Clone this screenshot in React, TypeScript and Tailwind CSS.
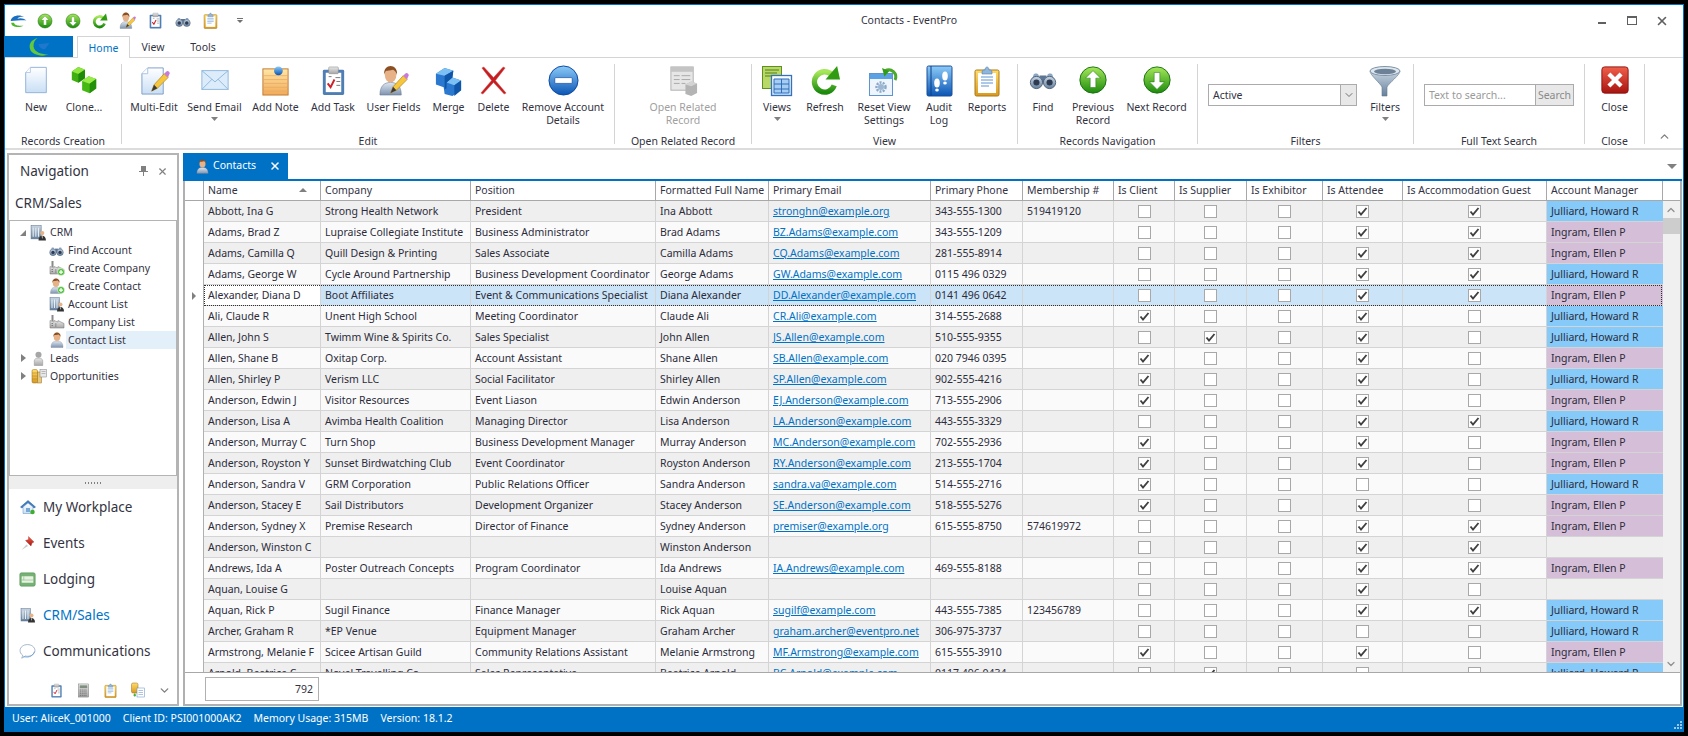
import type { ReactNode } from 'react';
import { ChevronDown, ChevronUp, X } from 'lucide-react';

type IconProps = { s?: number };

function Svg({ s = 32, children }: IconProps & { children: ReactNode }) {
  return (
    <svg width={s} height={s} viewBox="0 0 32 32" className="shrink-0">
      {children}
    </svg>
  );
}

// shared gradients, referenced by id from every icon
function Defs() {
  const g: [string, string, string][] = [
    ['gGreen', '#a6e85a', '#1c8a0c'],
    ['gBlue', '#8ccbf7', '#0a55b5'],
    ['gRed', '#f0604a', '#a81410'],
    ['gPaper', '#ffffff', '#c9dff5'],
    ['gNote', '#ffe7a6', '#f2aa56'],
    ['gGray', '#e8e8e8', '#a6a6a6'],
    ['gSteel', '#c9d6e2', '#66809c'],
    ['gBody', '#dfe7f1', '#7d93b0'],
    ['gGold', '#ffdc6a', '#d8991e'],
  ];
  return (
    <svg width="0" height="0" className="absolute">
      <defs>
        {g.map(([id, a, b]) => (
          <linearGradient key={id} id={id} x1="0" y1="0" x2="0" y2="1">
            <stop offset="0" stopColor={a} />
            <stop offset="1" stopColor={b} />
          </linearGradient>
        ))}
      </defs>
    </svg>
  );
}

const pencil = (
  <g>
    <path d="M13 27l2.5-6.500L26 9l4 4-11 11z" fill="#f6c63c" stroke="#b0801c" strokeWidth=".7" />
    <path d="M26 9l2-2a2 2 0 0 1 3 3l-1 3z" fill="#c77ad8" />
    <path d="M13 27l2.500-6.500 3.500 3.500z" fill="#3a3a3a" />
  </g>
);

const Page = ({ s }: IconProps) => (
  <Svg s={s}>
    <path d="M10 2.500h17v27H5V8z" fill="url(#gPaper)" stroke="#8fb0d8" />
    <path d="M10 2.500V8H5" fill="#fff" stroke="#b4cbe6" />
  </Svg>
);

const Clone = ({ s }: IconProps) => (
  <Svg s={s}>
    <path d="M3 7l7-5 7 3v9l-7 5-7-3z" fill="#3fae10" />
    <path d="M3 7l7-5 7 3-7 4.500z" fill="#8ee63f" />
    <path d="M10 9.500l7-4.500v9l-7 5z" fill="#1f8a08" />
    <path d="M14 17l7-5 8 3v10l-7 5-8-3z" fill="#46b814" />
    <path d="M14 17l7-5 8 3-7 5z" fill="#98ec48" />
    <path d="M22 20l7-5v10l-7 5z" fill="#238f0a" />
  </Svg>
);

const MultiEdit = ({ s }: IconProps) => (
  <Svg s={s}>
    <path d="M9 3h16v27H3V9z" fill="url(#gPaper)" stroke="#7f9fcb" />
    <path d="M9 3v6H3" fill="#fff" stroke="#a8c2e2" />
    {pencil}
  </Svg>
);

const Mail = ({ s }: IconProps) => (
  <Svg s={s}>
    <rect x="2" y="6" width="28" height="20" fill="#dcecfa" stroke="#8db6dc" />
    <path d="M2 6l14 12L30 6M2 26l11-11M30 26L19 15" fill="none" stroke="#8db6dc" />
  </Svg>
);

const Note = ({ s }: IconProps) => (
  <Svg s={s}>
    <rect x="3" y="4" width="26" height="27" fill="url(#gNote)" stroke="#c07a38" />
    <path d="M3 11h26M3 15h26M3 19h26M3 23h26M3 27h26" stroke="#e2a868" strokeWidth=".7" />
    <circle cx="19" cy="6" r="4.500" fill="url(#gBlue)" />
  </Svg>
);

const Task = ({ s }: IconProps) => (
  <Svg s={s}>
    <rect x="5" y="5" width="22" height="26" rx="1.500" fill="#4f7eb5" />
    <rect x="8" y="8" width="16" height="20" fill="#fff" />
    <rect x="11" y="2" width="10" height="7" rx="1" fill="url(#gGray)" stroke="#808080" strokeWidth=".5" />
    <path d="M10 19l3 4 4-8" fill="none" stroke="#d0202a" strokeWidth="2" />
    <path d="M18 13h5M19 17h4M19 21h4M11 12h3" stroke="#777" />
  </Svg>
);

const Person = ({ s }: IconProps) => (
  <Svg s={s}>
    <path d="M4 31c0-9 4-13 12-13s12 4 12 13z" fill="url(#gBody)" stroke="#6a7a90" strokeWidth=".6" />
    <ellipse cx="16" cy="10" rx="6.500" ry="8" fill="#e7b287" />
    <path d="M9 10c-1-6 3-9 7-9s8 3 7 9c-1-3-2-4-4-5-3 1-7 1-8 1-1 1-1.500 2-2 4z" fill="#8a4f22" />
  </Svg>
);

const UserFields = ({ s }: IconProps) => (
  <Svg s={s}>
    <path d="M2 31c0-9 4-13 11-13s11 4 11 13z" fill="url(#gBody)" stroke="#6a7a90" strokeWidth=".6" />
    <ellipse cx="13" cy="10" rx="6" ry="8" fill="#e7b287" />
    <path d="M6.500 10c-1-6 3-9 6.500-9s7.500 3 6.500 9c-1-3-2-4-4-5-3 1-6 1-7 1-1 1-1.500 2-2 4z" fill="#8a4f22" />
    <g transform="translate(0 2)">{pencil}</g>
  </Svg>
);

const Merge = ({ s }: IconProps) => (
  <Svg s={s}>
    <path d="M3 9l9-6 9 3-1 7 9 3v10l-9 6-8-2-1-7-8-3z" fill="#2a78d0" />
    <path d="M3 9l9-6 9 3-9 5zM20 13l9 3-7 5-8-3z" fill="#7cc0f4" />
    <path d="M12 11l9-5-1 7-6 5v6l-2 1zM22 21l7-5v10l-7 6z" fill="#0f56a8" />
  </Svg>
);

const Del = ({ s }: IconProps) => (
  <Svg s={s}>
    <path d="M4 3l2-1 10 11L26 2l2 1-10 13 11 13-2 1-11-12L5 30l-2-1 11-13z" fill="#c41e22" stroke="#d84c48" strokeWidth=".5" />
  </Svg>
);

const RemoveC = ({ s }: IconProps) => (
  <Svg s={s}>
    <circle cx="16" cy="16" r="15" fill="url(#gBlue)" stroke="#0c46a0" />
    <rect x="7" y="13" width="18" height="6" rx="1" fill="#fff" stroke="#0c46a0" strokeWidth=".7" />
  </Svg>
);

const OpenRel = ({ s }: IconProps) => (
  <Svg s={s}>
    <rect x="3" y="2" width="23" height="24" fill="#e6e6e6" stroke="#b0b0b0" />
    <rect x="3" y="2" width="23" height="5" fill="#c4c4c4" />
    <path d="M6 11h6M14 11h9M6 15h6M14 15h9M6 19h6M14 19h4" stroke="#a8a8a8" />
    <path d="M18 20l6-3 6 2v10l-6 3-6-2z" fill="#b4b4b4" />
    <path d="M18 20l6-3 6 2-6 3z" fill="#d4d4d4" />
  </Svg>
);

const Views = ({ s }: IconProps) => (
  <Svg s={s}>
    <rect x="1.500" y="1.500" width="19" height="22" fill="#b8d968" stroke="#5f8f20" />
    <path d="M4 5h14M4 8h12M4 11h6" stroke="#527e1a" />
    <rect x="10.500" y="10.500" width="20" height="20" fill="url(#gPaper)" stroke="#3472bc" strokeWidth="1.300" />
    <path d="M13 14h15v14H13zM13 19h15M13 24h15M20.500 14v14" fill="#a7cdf3" stroke="#2f6fbc" />
  </Svg>
);

const Refresh = ({ s }: IconProps) => (
  <Svg s={s}>
    <path d="M25 21a10.500 10.500 0 1 1-2.500-11" fill="none" stroke="url(#gGreen)" strokeWidth="5.500" />
    <path d="M16 15L31 15 28 1z" fill="#2f9c12" />
  </Svg>
);

const ResetV = ({ s }: IconProps) => (
  <Svg s={s}>
    <rect x="1.500" y="8.500" width="23" height="22" fill="#eef5fd" stroke="#5e94cf" />
    <rect x="2" y="9" width="22" height="5" fill="#5aa2e2" />
    <circle cx="13" cy="22" r="4.500" fill="none" stroke="#8ba9c8" strokeWidth="2.500" strokeDasharray="2 1.200" />
    <circle cx="13" cy="22" r="3" fill="#9db7d2" />
    <path d="M17 6a7 7 0 0 1 10 9" fill="none" stroke="#4aa82a" strokeWidth="3" />
    <path d="M15 2v9l6-4z" fill="#2f9c12" transform="rotate(-15 18 6)" />
  </Svg>
);

const Audit = ({ s }: IconProps) => (
  <Svg s={s}>
    <rect x="4" y="1" width="25" height="30" rx="1.500" fill="url(#gBlue)" stroke="#1d4f98" />
    <path d="M8 1v30" stroke="#0d3f86" />
    <ellipse cx="14" cy="18" rx="2.800" ry="4.500" fill="#fff" />
    <ellipse cx="14" cy="25" rx="1.800" ry="1.600" fill="#fff" />
    <ellipse cx="22" cy="11" rx="2.800" ry="4.500" fill="#fff" />
    <ellipse cx="22" cy="18" rx="1.800" ry="1.600" fill="#fff" />
  </Svg>
);

const Reports = ({ s }: IconProps) => (
  <Svg s={s}>
    <rect x="4" y="5" width="24" height="26" rx="1.500" fill="url(#gGold)" stroke="#a9791a" />
    <rect x="7" y="8" width="18" height="20" fill="#fff" />
    <path d="M10 12h12M10 15h12M10 18h12M10 21h8" stroke="#5f94cf" />
    <path d="M11 7c0-2 2-2 3-2 0-4 4-4 4 0 1 0 3 0 3 2v2H11z" fill="#8eb6dc" stroke="#557fae" strokeWidth=".6" />
  </Svg>
);

const Binoc = ({ s }: IconProps) => (
  <Svg s={s}>
    <rect x="12" y="12" width="8" height="9" fill="#5c7595" />
    <path d="M5 12c0-3 6-3 6 0l2 2v4H3zM21 12c0-3 6-3 6 0l2 6H19v-4z" fill="#8da6c4" />
    <circle cx="8.500" cy="20" r="7" fill="url(#gSteel)" stroke="#475a74" />
    <circle cx="23.500" cy="20" r="7" fill="url(#gSteel)" stroke="#475a74" />
    <circle cx="8.500" cy="20" r="3.500" fill="#2c3a52" />
    <circle cx="23.500" cy="20" r="3.500" fill="#2c3a52" />
  </Svg>
);

const ArrowC = ({ s, up }: IconProps & { up?: boolean }) => (
  <Svg s={s}>
    <circle cx="16" cy="16" r="14" fill="url(#gGreen)" stroke="#156f0c" />
    <path
      d={up ? 'M16 6l8 8h-5v10h-6V14H8z' : 'M16 26l8-8h-5V8h-6v10H8z'}
      fill="#fff"
      stroke="#156f0c"
      strokeWidth=".5"
    />
  </Svg>
);

const Funnel = ({ s }: IconProps) => (
  <Svg s={s}>
    <path d="M1 6c0 4 10 12 12 16v9l5 0v-9c2-4 13-12 13-16z" fill="url(#gSteel)" stroke="#63788f" strokeWidth=".6" />
    <ellipse cx="16" cy="6" rx="15" ry="4.500" fill="#dfe7ee" stroke="#7e93a8" />
    <ellipse cx="16" cy="6.500" rx="11" ry="2.800" fill="#6d8197" />
  </Svg>
);

const CloseI = ({ s }: IconProps) => (
  <Svg s={s}>
    <rect x="2" y="2" width="28" height="28" rx="3" fill="url(#gRed)" stroke="#8a1210" />
    <path d="M9.500 9.500l13 13M22.500 9.500l-13 13" stroke="#fff" strokeWidth="4.500" />
  </Svg>
);

const Logo = ({ s }: IconProps) => (
  <Svg s={s}>
    <path d="M14 3C4 6 1 12 3 19c2 8 16 12 27 8-10 0-21-3-22-12 0-6 2-9 6-12z" fill="#63c93a" />
    <path d="M15 12l16-2-6 9c-5 1-8-2-10-7z" fill="#1f78cc" />
  </Svg>
);

const LogoSmall = ({ s }: IconProps) => (
  <Svg s={s}>
    <path d="M4 19c0 8 14 10 22 5-8 1-16 0-17-5z" fill="#4db82a" />
    <path d="M3 16C4 7 17 3 28 9c-6-1-11 0-13 3 5-2 11-1 16 3-8-1-18 1-28 1z" fill="#1a6fc0" />
  </Svg>
);

const Building = ({ s }: IconProps) => (
  <Svg s={s}>
    <rect x="2" y="3" width="19" height="25" fill="url(#gSteel)" stroke="#5a7090" />
    <path d="M6 7v17M11 7v17M16 7v17" stroke="#e6eef6" strokeWidth="2" />
    <circle cx="23" cy="17" r="4" fill="#e7b287" />
    <path d="M16 31c0-6 3-9 7-9s7 3 7 9z" fill="#333" />
    <path d="M22 23h2l-1 5z" fill="#fff" />
  </Svg>
);

const PlusB = () => (
  <g>
    <circle cx="24" cy="24" r="7" fill="#4fbf3a" stroke="#fff" />
    <path d="M24 20v8M20 24h8" stroke="#fff" strokeWidth="2.500" />
  </g>
);

const Factory = ({ s, plus }: IconProps & { plus?: boolean }) => (
  <Svg s={s}>
    <rect x="5" y="2" width="4" height="12" fill="#8a8a8a" />
    <path d="M2 28V13l8 3 0-3 8 3 0-3 12 6v9z" fill="url(#gGray)" stroke="#6f6f6f" />
    <path d="M5 19h3M5 23h3M12 20h3M12 24h3" stroke="#666" strokeWidth="1.500" />
    {plus && <PlusB />}
  </Svg>
);

const PersonPlus = ({ s }: IconProps) => (
  <Svg s={s}>
    <path d="M3 31c0-9 4-13 11-13s11 4 11 13z" fill="url(#gBody)" stroke="#6a7a90" strokeWidth=".6" />
    <ellipse cx="14" cy="10" rx="6.500" ry="8" fill="#e7b287" />
    <path d="M7 10c-1-6 3-9 7-9s8 3 7 9c-1-3-2-4-4-5-3 1-7 1-8 1-1 1-1.500 2-2 4z" fill="#8a4f22" />
    <PlusB />
  </Svg>
);

const LeadI = ({ s }: IconProps) => (
  <Svg s={s}>
    <circle cx="16" cy="8" r="6.500" fill="#a6a6a6" />
    <path d="M7 31V21c0-4 4-6 9-6s9 2 9 6v10z" fill="url(#gGray)" stroke="#8a8a8a" />
  </Svg>
);

const Opps = ({ s }: IconProps) => (
  <Svg s={s}>
    <rect x="2" y="3" width="11" height="27" rx="3" fill="url(#gGold)" stroke="#9a6a18" />
    <path d="M2 10h11M2 16h11M2 22h11" stroke="#a87a20" />
    <rect x="13" y="8" width="8" height="22" fill="#e6c87a" stroke="#9a6a18" />
    <rect x="18" y="3" width="13" height="15" fill="#e8e8e8" stroke="#808080" />
    <path d="M21 7h8M21 11h8" stroke="#888" />
  </Svg>
);

const House = ({ s }: IconProps) => (
  <Svg s={s}>
    <path d="M16 3L1 16l3 2 12-10 12 10 3-2z" fill="#3d7fc6" stroke="#25578f" />
    <path d="M6 16l10-8 10 8v13H6z" fill="url(#gPaper)" stroke="#5f8cc0" />
    <rect x="12" y="18" width="8" height="8" fill="#7aa8d6" />
    <circle cx="25" cy="26" r="4.500" fill="#3fae30" />
  </Svg>
);

const Pin = ({ s }: IconProps) => (
  <Svg s={s}>
    <path d="M3 30l10-11 3 3z" fill="#c9c9c9" />
    <path d="M17 3l11 11-4 2-2 6-11-11 6-2z" fill="url(#gRed)" stroke="#9a1512" strokeWidth=".6" />
  </Svg>
);

const Lodging = ({ s }: IconProps) => (
  <Svg s={s}>
    <rect x="1.500" y="3.500" width="29" height="25" rx="3" fill="#76b276" stroke="#4f8a4f" />
    <rect x="5" y="10" width="22" height="12" rx="1" fill="#e8f2e2" />
    <path d="M5 17h22M9 10v7" stroke="#76b276" />
  </Svg>
);

const Bubble = ({ s }: IconProps) => (
  <Svg s={s}>
    <path d="M16 3c8 0 14 5 14 11s-6 11-14 11c-1 0-3 0-4-.500-2 2-4 3-7 4 1-2 2-4 1.500-6C3 20.500 2 17 2 14 2 8 8 3 16 3z" fill="#fff" stroke="#7f98b4" strokeWidth="1.300" />
    <path d="M8 25c6 3 18 2 21-9" fill="none" stroke="#4d8fd0" strokeWidth="1.300" />
  </Svg>
);

const Calc = ({ s }: IconProps) => (
  <Svg s={s}>
    <rect x="5" y="2" width="22" height="28" fill="url(#gGray)" stroke="#777" />
    <rect x="8" y="5" width="16" height="6" fill="#7f8f7f" />
    <path d="M8 15h16M8 19h16M8 23h16M8 27h16" stroke="#666" strokeWidth="2" strokeDasharray="2.500 1.500" />
  </Svg>
);

const Documents = ({ s }: IconProps) => (
  <Svg s={s}>
    <rect x="3" y="2" width="13" height="20" rx="3" fill="url(#gGold)" stroke="#9a6a18" />
    <rect x="14" y="12" width="15" height="18" fill="#fff" stroke="#5a8ac0" />
    <path d="M17 17h9M17 21h9M17 25h9" stroke="#5a8ac0" />
    <path d="M7 26h5M9.500 23v6" stroke="#3fae30" strokeWidth="2.500" />
  </Svg>
);

const Tick = () => (
  <svg width="11" height="11" viewBox="0 0 11 11">
    <path d="M1.500 5.500L4 8.500 9.500 2" fill="none" stroke="#404040" strokeWidth="1.900" />
  </svg>
);

const Caret = () => (
  <svg width="7" height="4" viewBox="0 0 7 4" className="mx-auto mt-[3px]">
    <path d="M0 0h7L3.500 4z" fill="#808080" />
  </svg>
);

function RibbonBtn({
  icon,
  label,
  w,
  caret,
  off,
}: {
  icon: ReactNode;
  label: ReactNode;
  w: string;
  caret?: boolean;
  off?: boolean;
}) {
  return (
    <div className={`${w} flex flex-col items-center text-center`}>
      <div className="flex h-[37px] items-start justify-center pt-[1px]">{icon}</div>
      <div className={`leading-[13px] ${off ? 'text-[#a0a0a0]' : ''}`}>{label}</div>
      {caret && <Caret />}
    </div>
  );
}

function Group({ w, label, pl, center, children }: { w: string; label: string; pl?: string; center?: boolean; children: ReactNode }) {
  return (
    <div className={`${w} h-[80px] shrink-0 border-r border-[#d4d4d4]`}>
      <div className={`flex h-[70px] ${pl ?? ''} ${center ? 'justify-center' : ''}`}>{children}</div>
      <div className="h-[14px] text-center leading-[14px] whitespace-nowrap">{label}</div>
    </div>
  );
}

function Ribbon() {
  return (
    <div className="flex h-[92px] items-start border-b-2 border-[#dcdcdc] pt-[6px]">
      <Group w="w-[117px]" label="Records Creation" pl="pl-[9px]">
        <RibbonBtn w="w-[44px]" icon={<Page s={30} />} label="New" />
        <RibbonBtn w="w-[52px]" icon={<Clone s={30} />} label="Clone..." />
      </Group>
      <Group w="w-[493px]" label="Edit" pl="pl-[5px]">
        <RibbonBtn w="w-[54px]" icon={<MultiEdit s={31} />} label="Multi-Edit" />
        <RibbonBtn w="w-[67px]" icon={<Mail s={30} />} label="Send Email" caret />
        <RibbonBtn w="w-[55px]" icon={<Note s={31} />} label="Add Note" />
        <RibbonBtn w="w-[60px]" icon={<Task s={31} />} label="Add Task" />
        <RibbonBtn w="w-[61px]" icon={<UserFields s={31} />} label="User Fields" />
        <RibbonBtn w="w-[49px]" icon={<Merge s={31} />} label="Merge" />
        <RibbonBtn w="w-[41px]" icon={<Del s={31} />} label="Delete" />
        <RibbonBtn w="w-[98px]" icon={<RemoveC s={31} />} label={<>Remove Account<br />Details</>} />
      </Group>
      <Group w="w-[137px]" label="Open Related Record" center>
        <RibbonBtn w="w-[100px]" icon={<OpenRel s={31} />} label={<>Open Related<br />Record</>} off />
      </Group>
      <Group w="w-[266px]" label="View">
        <RibbonBtn w="w-[50px]" icon={<Views s={32} />} label="Views" caret />
        <RibbonBtn w="w-[46px]" icon={<Refresh s={31} />} label="Refresh" />
        <RibbonBtn w="w-[72px]" icon={<ResetV s={32} />} label={<>Reset View<br />Settings</>} />
        <RibbonBtn w="w-[38px]" icon={<Audit s={32} />} label={<>Audit<br />Log</>} />
        <RibbonBtn w="w-[58px]" icon={<Reports s={32} />} label="Reports" />
      </Group>
      <Group w="w-[180px]" label="Records Navigation">
        <RibbonBtn w="w-[50px]" icon={<Binoc s={28} />} label="Find" />
        <RibbonBtn w="w-[50px]" icon={<ArrowC s={30} up />} label={<>Previous<br />Record</>} />
        <RibbonBtn w="w-[77px]" icon={<ArrowC s={30} />} label="Next Record" />
      </Group>
      <Group w="w-[216px]" label="Filters" pl="pl-[10px]">
        <div className="mt-[20px] flex h-[22px] w-[150px] border border-[#ababab]">
          <div className="flex-1 pl-[4px] leading-[20px]">Active</div>
          <div className="flex w-[16px] items-center justify-center border-l border-[#ababab] bg-[#e8e8e8]">
            <ChevronDown size={12} color="#707070" strokeWidth={2} />
          </div>
        </div>
        <RibbonBtn w="w-[56px]" icon={<Funnel s={32} />} label="Filters" caret />
      </Group>
      <Group w="w-[171px]" label="Full Text Search" pl="pl-[10px]">
        <div className="mt-[20px] flex h-[22px] w-[150px] border border-[#ababab]">
          <div className="flex-1 pl-[4px] leading-[20px] text-[#9a9a9a]">Text to search...</div>
          <div className="w-[38px] border-l border-[#ababab] bg-[#e8e8e8] text-center leading-[20px] text-[#8a8a8a]">Search</div>
        </div>
      </Group>
      <Group w="w-[60px]" label="Close" center>
        <RibbonBtn w="w-[50px]" icon={<CloseI s={30} />} label="Close" />
      </Group>
      <div className="flex h-[80px] flex-1 items-end justify-center pb-[1px]">
        <ChevronUp size={13} color="#808080" strokeWidth={2.500} />
      </div>
    </div>
  );
}

function TitleBar() {
  const qat = [
    <LogoSmall s={18} />,
    <ArrowC s={16} up />,
    <ArrowC s={16} />,
    <Refresh s={16} />,
    <UserFields s={17} />,
    <Task s={17} />,
    <Binoc s={16} />,
    <Reports s={17} />,
  ];
  return (
    <div className="flex h-[31px] items-center">
      <div className="-ml-[1px] flex w-[241px]">
        {qat.map((icon, i) => (
          <div key={i} className="flex h-[20px] w-[28px] items-center justify-center">{icon}</div>
        ))}
        <div className="ml-[11px] flex h-[20px] w-[10px] flex-col items-center justify-center gap-[1px]">
          <div className="h-px w-[6px] bg-[#707070]" />
          <div className="h-0 w-0 border-x-[3px] border-t-[3px] border-x-transparent border-t-[#707070]" />
        </div>
      </div>
      <div className="flex-1 pr-[14px] text-center">Contacts - EventPro</div>
      <div className="flex w-[96px] items-center">
        <div className="flex w-[30px] justify-center pt-[4px]"><div className="h-[2px] w-[8px] bg-[#606060]" /></div>
        <div className="flex w-[30px] justify-center">
          <div className="h-[9px] w-[10px] border border-t-2 border-[#606060]" />
        </div>
        <div className="flex w-[30px] justify-center"><X size={14} color="#606060" strokeWidth={2.800} /></div>
      </div>
    </div>
  );
}

function TabRow() {
  return (
    <div className="flex h-[22px] items-stretch border-b border-[#d4d4d4]">
      <div className="flex w-[68px] items-center justify-center bg-[#0072c6]"><Logo s={22} /></div>
      <div className="relative ml-[4px] h-[22px] w-[53px] border-x border-t border-[#d4d4d4] bg-white text-center leading-[22px] text-[#0072c6]">Home</div>
      <div className="w-[46px] text-center leading-[22px]">View</div>
      <div className="w-[54px] text-center leading-[22px]">Tools</div>
    </div>
  );
}

const tree: { icon: ReactNode; label: string; child?: boolean; sel?: boolean; arrow?: 'open' | 'closed' }[] = [
  { icon: <Building s={17} />, label: 'CRM', arrow: 'open' },
  { icon: <Binoc s={15} />, label: 'Find Account', child: true },
  { icon: <Factory s={16} plus />, label: 'Create Company', child: true },
  { icon: <PersonPlus s={16} />, label: 'Create Contact', child: true },
  { icon: <Building s={16} />, label: 'Account List', child: true },
  { icon: <Factory s={16} />, label: 'Company List', child: true },
  { icon: <Person s={16} />, label: 'Contact List', child: true, sel: true },
  { icon: <LeadI s={15} />, label: 'Leads', arrow: 'closed' },
  { icon: <Opps s={16} />, label: 'Opportunities', arrow: 'closed' },
];

const outlook: { icon: ReactNode; label: string; active?: boolean }[] = [
  { icon: <House s={16} />, label: 'My Workplace' },
  { icon: <Pin s={16} />, label: 'Events' },
  { icon: <Lodging s={17} />, label: 'Lodging' },
  { icon: <Building s={16} />, label: 'CRM/Sales', active: true },
  { icon: <Bubble s={17} />, label: 'Communications' },
];

function NavPanel() {
  return (
    <div className="flex h-[553px] w-[172px] shrink-0 flex-col border-2 border-[#b4b4b4]">
      <div className="flex h-[32px] items-center pr-[9px] pl-[11px]">
        <span className="flex-1 text-[13.5px]">Navigation</span>
        <svg width="9" height="10" viewBox="0 0 9 10" className="mr-[9px]">
          <path d="M2 0h5v5h2v1H5v4H4V6H0V5h2z" fill="#808080" />
        </svg>
        <X size={11} color="#808080" strokeWidth={2.500} />
      </div>
      <div className="h-[33px] pl-[6px] text-[13.5px] leading-[33px]">CRM/Sales</div>
      <div className="h-[256px] border border-[#b4b4b4] pt-[2px]">
        {tree.map((t) => (
          <div key={t.label} className="flex h-[18px] items-center">
            <div className="flex w-[19px] shrink-0 justify-end pr-[3px]">
              {t.arrow === 'open' && <div className="mt-[2px] h-0 w-0 border-b-[6px] border-l-[6px] border-b-[#808080] border-l-transparent" />}
              {t.arrow === 'closed' && <div className="h-0 w-0 border-y-[4px] border-l-[5px] border-y-transparent border-l-[#808080]" />}
            </div>
            <div className={`flex w-[19px] shrink-0 justify-center ${t.child ? 'ml-[18px]' : ''}`}>{t.icon}</div>
            <div className={`h-[18px] flex-1 pl-[2px] leading-[18px] ${t.sel ? 'bg-[#e3eff9]' : ''}`}>{t.label}</div>
          </div>
        ))}
      </div>
      <div className="flex h-[13px] items-center justify-center gap-[2px] bg-[#eeeeee]">
        {[0, 1, 2, 3, 4, 5].map((i) => <div key={i} className="h-[2px] w-[1px] bg-[#808080]" />)}
      </div>
      <div className="flex-1">
        {outlook.map((o) => (
          <div key={o.label} className={`flex h-[36px] items-center gap-[7px] pl-[10px] text-[13.5px] ${o.active ? 'text-[#0072c6]' : ''}`}>
            <div className="flex w-[17px] justify-center">{o.icon}</div>
            {o.label}
          </div>
        ))}
      </div>
      <div className="flex h-[24px] items-center pb-[4px] pl-[34px]">
        <div className="flex w-[28px] justify-center"><Task s={15} /></div>
        <div className="flex w-[28px] justify-center"><Calc s={15} /></div>
        <div className="flex w-[28px] justify-center"><Reports s={15} /></div>
        <div className="flex w-[28px] justify-center"><Documents s={16} /></div>
        <div className="flex w-[26px] justify-center"><ChevronDown size={13} color="#808080" strokeWidth={2.500} /></div>
      </div>
    </div>
  );
}

type Row = [string, string, string, string, string, string, string, string, '' | 'J' | 'I'];

const rows: Row[] = [
  ['Abbott, Ina G', 'Strong Health Network', 'President', 'Ina Abbott', 'stronghn@example.org', '343-555-1300', '519419120', '00011', 'J'],
  ['Adams, Brad Z', 'Lupraise Collegiate Institute', 'Business Administrator', 'Brad Adams', 'BZ.Adams@example.com', '343-555-1209', '', '00011', 'I'],
  ['Adams, Camilla Q', 'Quill Design & Printing', 'Sales Associate', 'Camilla Adams', 'CQ.Adams@example.com', '281-555-8914', '', '00011', 'I'],
  ['Adams, George W', 'Cycle Around Partnership', 'Business Development Coordinator', 'George Adams', 'GW.Adams@example.com', '0115 496 0329', '', '00011', 'J'],
  ['Alexander, Diana D', 'Boot Affiliates', 'Event & Communications Specialist', 'Diana Alexander', 'DD.Alexander@example.com', '0141 496 0642', '', '00011', 'I'],
  ['Ali, Claude R', 'Unent High School', 'Meeting Coordinator', 'Claude Ali', 'CR.Ali@example.com', '314-555-2688', '', '10010', 'J'],
  ['Allen, John S', 'Twimm Wine & Spirits Co.', 'Sales Specialist', 'John Allen', 'JS.Allen@example.com', '510-555-9355', '', '01010', 'J'],
  ['Allen, Shane B', 'Oxitap Corp.', 'Account Assistant', 'Shane Allen', 'SB.Allen@example.com', '020 7946 0395', '', '10010', 'I'],
  ['Allen, Shirley P', 'Verism LLC', 'Social Facilitator', 'Shirley Allen', 'SP.Allen@example.com', '902-555-4216', '', '10010', 'J'],
  ['Anderson, Edwin J', 'Visitor Resources', 'Event Liason', 'Edwin Anderson', 'EJ.Anderson@example.com', '713-555-2906', '', '10010', 'I'],
  ['Anderson, Lisa A', 'Avimba Health Coalition', 'Managing Director', 'Lisa Anderson', 'LA.Anderson@example.com', '443-555-3329', '', '00011', 'J'],
  ['Anderson, Murray C', 'Turn Shop', 'Business Development Manager', 'Murray Anderson', 'MC.Anderson@example.com', '702-555-2936', '', '10010', 'I'],
  ['Anderson, Royston Y', 'Sunset Birdwatching Club', 'Event Coordinator', 'Royston Anderson', 'RY.Anderson@example.com', '213-555-1704', '', '10010', 'I'],
  ['Anderson, Sandra V', 'GRM Corporation', 'Public Relations Officer', 'Sandra Anderson', 'sandra.va@example.com', '514-555-2716', '', '10000', 'J'],
  ['Anderson, Stacey E', 'Sail Distributors', 'Development Organizer', 'Stacey Anderson', 'SE.Anderson@example.com', '518-555-5276', '', '10010', 'I'],
  ['Anderson, Sydney X', 'Premise Research', 'Director of Finance', 'Sydney Anderson', 'premiser@example.org', '615-555-8750', '574619972', '00011', 'I'],
  ['Anderson, Winston C', '', '', 'Winston Anderson', '', '', '', '00011', ''],
  ['Andrews, Ida A', 'Poster Outreach Concepts', 'Program Coordinator', 'Ida Andrews', 'IA.Andrews@example.com', '469-555-8188', '', '00011', 'I'],
  ['Aquan, Louise G', '', '', 'Louise Aquan', '', '', '', '00010', ''],
  ['Aquan, Rick P', 'Sugil Finance', 'Finance Manager', 'Rick Aquan', 'sugilf@example.com', '443-555-7385', '123456789', '00011', 'J'],
  ['Archer, Graham R', '*EP Venue', 'Equipment Manager', 'Graham Archer', 'graham.archer@eventpro.net', '306-975-3737', '', '00000', 'J'],
  ['Armstrong, Melanie F', 'Scicee Artisan Guild', 'Community Relations Assistant', 'Melanie Armstrong', 'MF.Armstrong@example.com', '615-555-3910', '', '10010', 'I'],
  ['Arnold, Beatrice C', 'Novel Travelling Co.', 'Sales Representative', 'Beatrice Arnold', 'BC.Arnold@example.com', '0117 496 0434', '', '01000', 'J'],
];

const cols = 'grid grid-cols-[19px_117px_150px_185px_113px_162px_92px_91px_61px_72px_76px_80px_144px_116px]';
const headers = ['Name', 'Company', 'Position', 'Formatted Full Name', 'Primary Email', 'Primary Phone', 'Membership #', 'Is Client', 'Is Supplier', 'Is Exhibitor', 'Is Attendee', 'Is Accommodation Guest', 'Account Manager'];

function Check({ on }: { on: boolean }) {
  return (
    <div className="flex h-full items-center justify-center border-r border-[#d4d4d4]">
      <div className="flex h-[13px] w-[13px] items-center justify-center border border-[#a8a8a8] bg-white">{on && <Tick />}</div>
    </div>
  );
}

function Cell({ children, link }: { children: ReactNode; link?: boolean }) {
  return (
    <div className={`overflow-hidden border-r border-[#d4d4d4] pl-[4px] leading-[20px] whitespace-nowrap ${link ? 'text-[#0072c6] underline' : ''}`}>
      {children}
    </div>
  );
}

function GridRow({ r, i }: { r: Row; i: number }) {
  const selected = i === 4;
  const bg = selected ? 'bg-[#cce4f7]' : i % 2 === 0 ? 'bg-[#efefef]' : 'bg-[#fafafa]';
  return (
    <div className={`${cols} relative h-[21px] text-[#2c2c3a]`}>
      <div className="flex items-center justify-center border-r border-[#b0b0b0] bg-white">
        {selected && <div className="h-0 w-0 border-y-[4px] border-l-[4px] border-y-transparent border-l-[#808080]" />}
      </div>
      <div className={`col-span-13 grid grid-cols-subgrid border-b border-[#d4d4d4] ${bg}`}>
        <div className={`overflow-hidden border-r border-[#d4d4d4] pl-[4px] leading-[20px] whitespace-nowrap ${selected ? 'bg-white' : ''}`}>{r[0]}</div>
        <Cell>{r[1]}</Cell>
        <Cell>{r[2]}</Cell>
        <Cell>{r[3]}</Cell>
        <Cell link>{r[4]}</Cell>
        <Cell>{r[5]}</Cell>
        <Cell>{r[6]}</Cell>
        {[0, 1, 2, 3, 4].map((c) => <Check key={c} on={r[7][c] === '1'} />)}
        <div className={`pl-[4px] leading-[20px] whitespace-nowrap ${r[8] === 'J' ? 'bg-[#85caf9]' : r[8] === 'I' ? 'bg-[#d5bfd8]' : ''}`}>
          {r[8] === 'J' ? 'Julliard, Howard R' : r[8] === 'I' ? 'Ingram, Ellen P' : ''}
        </div>
      </div>
      {selected && <div className="pointer-events-none absolute inset-y-0 right-0 left-[19px] border border-dotted border-[#303030]" />}
    </div>
  );
}

function Grid() {
  return (
    <div className="flex min-h-0 flex-1 flex-col border-x-2 border-b-2 border-[#b0b0b0]">
      <div className="flex h-[20px] shrink-0 border-b border-[#a8a8a8]">
        <div className={`${cols} w-[1477px] text-[#333345]`}>
          <div className="border-r border-[#a8a8a8]" />
          {headers.map((h, i) => (
            <div key={h} className="relative border-r border-[#a8a8a8] pl-[4px] leading-[19px] whitespace-nowrap">
              {h}
              {i === 0 && <div className="absolute top-[7px] right-[13px] h-0 w-0 border-x-[4px] border-b-[4px] border-x-transparent border-b-[#808080]" />}
            </div>
          ))}
        </div>
      </div>
      <div className="flex h-[472px] shrink-0 overflow-hidden border-b border-[#a8a8a8]">
        <div className="w-[1477px] shrink-0">
          {rows.map((r, i) => <GridRow key={r[0]} r={r} i={i} />)}
        </div>
        <div className="flex flex-1 flex-col items-center bg-[#f0f0f0]">
          <div className="flex h-[17px] items-center"><ChevronUp size={12} color="#909090" strokeWidth={2.500} /></div>
          <div className="h-[16px] w-full bg-[#cdcdcd]" />
          <div className="flex-1" />
          <div className="flex h-[17px] items-center"><ChevronDown size={12} color="#909090" strokeWidth={2.500} /></div>
        </div>
      </div>
      <div className="flex flex-1 items-center pl-[20px]">
        <div className="h-[24px] w-[114px] border border-[#b0b0b0] pr-[5px] text-right leading-[22px]">792</div>
      </div>
    </div>
  );
}

function Main() {
  return (
    <div className="flex h-[553px] min-w-0 flex-1 flex-col">
      <div className="flex h-[26px] shrink-0 items-stretch">
        <div className="flex w-[105px] items-center bg-[#0072c6] pl-[12px] text-white">
          <Person s={15} />
          <span className="ml-[3px] flex-1">Contacts</span>
          <X size={12} strokeWidth={3} className="mr-[7px]" />
        </div>
        <div className="flex flex-1 items-center justify-end pr-[5px]">
          <div className="h-0 w-0 border-x-[5px] border-t-[5px] border-x-transparent border-t-[#808080]" />
        </div>
      </div>
      <div className="h-[2px] shrink-0 bg-[#0072c6]" />
      <Grid />
    </div>
  );
}

export default function App() {
  return (
    <div className="h-[736px] w-[1688px] bg-black p-[4px] font-['Noto_Sans',sans-serif] text-[10.5px] text-[#33333f]">
      <Defs />
      <div className="flex h-[728px] w-[1680px] flex-col overflow-hidden border border-[#0072c6] bg-white">
        <TitleBar />
        <TabRow />
        <Ribbon />
        <div className="flex h-[557px] gap-[4px] pt-[3px] pr-[1px] pl-[2px]">
          <NavPanel />
          <Main />
        </div>
        <div className="flex flex-1 items-center gap-[12px] bg-[#0072c6] pl-[7px] text-white">
          <span>User: AliceK_001000</span>
          <span>Client ID: PSI001000AK2</span>
          <span>Memory Usage: 315MB</span>
          <span>Version: 18.1.2</span>
          <svg width="8" height="8" viewBox="0 0 8 8" className="mt-auto mr-[1px] mb-[2px] ml-auto">
            <path d="M6 0h2v2H6zM3 3h2v2H3zM6 3h2v2H6zM0 6h2v2H0zM3 6h2v2H3zM6 6h2v2H6z" fill="#9cc7e8" />
          </svg>
        </div>
      </div>
    </div>
  );
}
